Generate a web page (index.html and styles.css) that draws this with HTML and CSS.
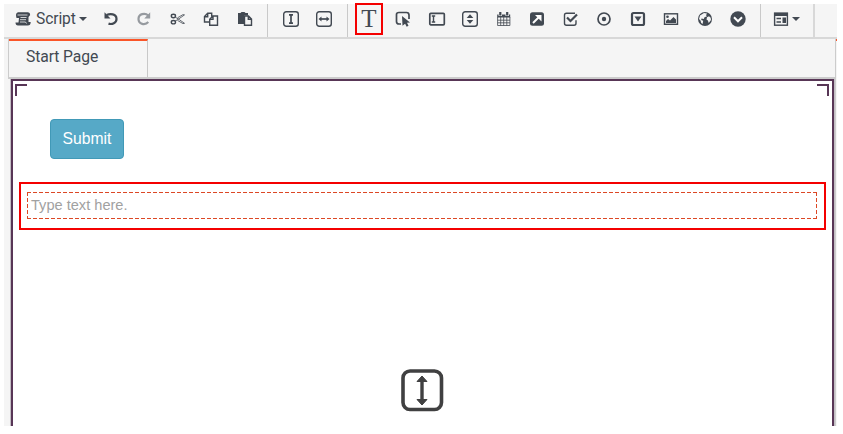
FILE: index.html
```html
<!DOCTYPE html>
<html lang="en">
<head>
<meta charset="utf-8">
<title>Page designer</title>
<link rel="stylesheet" href="styles.css">
</head>
<body>
<div class="app">
  <div class="toolbar">
    <div class="group group-edit">
      <button class="menu script">
        <svg class="icon" viewBox="0 0 18 18"><path d="M4 2.200h10q2.200 .3 2.200 2.800L14.500 7v5h2.200q0 3.500-3 3.500H4q-2.500 0-2.500-3h3L5 8H2.500Q1 3 4 2.200Z" class="solid"/><path d="M3.500 5h10M6.500 7.500h6M6 9.700h6M6 12h5.500l1 1.500" class="paper"/></svg>
        <span>Script</span><i class="caret"></i>
      </button>
      <button class="tool"><svg class="icon" viewBox="0 0 18 18"><path d="M4.500 5C8 3.600 14.500 3.500 14.500 9c0 4-4.500 5.800-8 4.600" class="line heavy"/><path d="M2.500 2.300v6.200h6Z" class="solid"/></svg></button>
      <button class="tool muted"><svg class="icon" viewBox="0 0 18 18"><path d="M13.300 5.500C10 2.500 3.500 3.800 3.500 9c0 5.200 6.500 6.700 9.800 3" class="line heavy"/><path d="M15.200 2.300v6.200H9.300Z" class="solid"/></svg></button>
      <button class="tool"><svg class="icon" viewBox="0 0 18 18"><path d="M6.300 7.200l3.200 1.900 6-4.200-1.500-.3-5.500 3.200M6.300 11l3.200-1.900 6 4.200-1.500 .3-5.500-3.200" class="line hair"/><ellipse cx="4.400" cy="6" rx="2.100" ry="1.700" class="line thin"/><ellipse cx="4.400" cy="12.200" rx="2.100" ry="1.700" class="line thin"/></svg></button>
      <button class="tool"><svg class="icon" viewBox="0 0 18 18"><path d="M7 12H2.500V6.500l3.200-3.200h4v3.200M5.700 3.500v3.200h-3M7.700 15.300V9.200l3.200-3.200h4.600v9.300ZM11 6v3.400H7.800" class="line thin"/></svg></button>
      <button class="tool"><svg class="icon" viewBox="0 0 18 18"><path d="M2 3h2.500l1-1h3l1 1H12v2.500H8V14H2Z" class="solid"/><path d="M8.500 6h4l3 3v6.300h-7ZM12.300 6v3.200h3.200" class="line thin"/></svg></button>
    </div>
    <div class="group group-size">
      <button class="tool"><svg class="icon" viewBox="0 0 18 18"><rect x="1.700" y="1.700" width="14.600" height="14.600" rx="2.500" class="line thin"/><path d="M9 5v8M7 4.800h4M7 13.200h4" class="line"/></svg></button>
      <button class="tool"><svg class="icon" viewBox="0 0 18 18"><rect x="1.700" y="1.700" width="14.600" height="14.600" rx="2.500" class="line thin"/><path d="M5 9h8" class="line"/><path d="M3.500 9l3-2.500v5ZM14.500 9l-3-2.500v5Z" class="solid"/></svg></button>
    </div>
    <div class="group group-fields">
      <button class="tool text-tool">T</button>
      <button class="tool"><svg class="icon" viewBox="0 0 18 18"><path d="M7 14H5q-2.500 0-2.500-2.500V4.500Q2.500 2.500 5 2.500h7.500Q15 2.500 15 5v4" class="line"/><path d="M8 6l8 6.500-3 .2 1.500 3-1.800 1-1.600-3-2.600 2Z" class="solid"/></svg></button>
      <button class="tool"><svg class="icon" viewBox="0 0 18 18"><rect x="1.800" y="3.300" width="14.500" height="11.500" rx="1" class="line"/><path d="M5.500 6v6M3.800 6h3.400M3.800 12h3.400" class="line thin"/></svg></button>
      <button class="tool"><svg class="icon" viewBox="0 0 18 18"><rect x="1.700" y="1.700" width="14.600" height="14.600" rx="2.500" class="line thin"/><path d="M5.700 8L9 4.300 12.300 8ZM5.700 10h6.600L9 13.700Z" class="solid"/></svg></button>
      <button class="tool"><svg class="icon" viewBox="0 0 18 18"><path d="M2.200 4.500h13v3h-13Z" class="solid"/><path d="M2.600 7v8.500h12.300V7M2.600 10.200h12.300M2.600 12.800h12.300M5.700 7v8.500M8.700 7v8.500M11.800 7v8.500" class="line hair"/><path d="M5.300 2v4M12.200 2v4" class="paper wide"/><path d="M5.300 2v3.500M12.200 2v3.500" class="line heavy"/></svg></button>
      <button class="tool"><svg class="icon" viewBox="0 0 18 18"><rect x="2" y="2.300" width="14" height="13.500" rx="2.500" class="solid"/><path d="M5 13l6-6" class="bright"/><path d="M7 5h6.500v6.500Z" fill="#fff"/></svg></button>
      <button class="tool"><svg class="icon" viewBox="0 0 18 18"><path d="M13 3.300H4.500q-2 0-2 2v8q0 2 2 2h7.500q2 0 2-2v-3" class="line thin"/><path d="M5 7.500l3.500 3.500 6.500-6.500" class="line heavy"/></svg></button>
      <button class="tool"><svg class="icon" viewBox="0 0 18 18"><circle cx="9" cy="9" r="6" class="line"/><circle cx="9" cy="9" r="2.200" class="solid"/></svg></button>
      <button class="tool"><svg class="icon" viewBox="0 0 18 18"><rect x="3" y="3" width="12" height="12" rx="1.500" class="line heavy"/><path d="M5.500 6.500h7L9 11.500Z" class="solid"/></svg></button>
      <button class="tool"><svg class="icon" viewBox="0 0 18 18"><rect x="2.500" y="3.800" width="13" height="10.500" class="line thin"/><circle cx="5.500" cy="6.800" r="1.300" class="solid"/><path d="M4 13v-2l2-2 2 1.500L11.500 7 14 9.500V13Z" class="solid"/></svg></button>
      <button class="tool"><svg class="icon" viewBox="0 0 18 18"><circle cx="9" cy="9" r="7" class="solid"/><path d="M8 2.900l3 .6-1 1.700 1 1-2.500 1-.7 1.800-2.300-.5-.3 1.500 2 .7-.6 3.300-1.400-1-.7-2.500L3 9l1-3.500ZM13 6.300l1.700 1.400.3 2.300-2.300 3-.8-2.500-1.400-1 .5-2.200Z" class="land"/></svg></button>
      <button class="tool"><svg class="icon" viewBox="0 0 18 18"><circle cx="9" cy="9" r="7.700" class="solid"/><path d="M5 7.300l4 4 4-4" class="bright"/></svg></button>
    </div>
    <div class="group group-layout">
      <button class="menu"><svg class="icon layout-icon" viewBox="0 0 18 18"><rect x="2.600" y="3.200" width="12.800" height="12" class="line thin"/><path d="M2 2.700h14v3.300H2ZM10.500 7.500H14V13h-3.500Z" class="solid"/><path d="M4.500 8.500H9M4.500 12H9" class="line"/></svg><i class="caret"></i></button>
    </div>
  </div>
  <div class="panels">
    <div class="workspace">
      <div class="tabs"><div class="tab">Start Page</div></div>
      <div class="canvas">
        <i class="corner corner-left"></i><i class="corner corner-right"></i>
        <button class="submit">Submit</button>
        <div class="selection"><div class="text-field">Type text here.</div></div>
        <svg class="resize" viewBox="0 0 44 44"><rect x="3" y="3" width="38.500" height="38.500" rx="7" fill="none" stroke="#404041" stroke-width="3.600"/><path d="M22 12v21" stroke="#404041" stroke-width="3.400"/><path d="M22 8l5 5.500H17ZM22 37l5-5.500H17Z" fill="#404041" stroke="#404041" stroke-linejoin="round"/></svg>
      </div>
    </div>
    <div class="side-panel"></div>
  </div>
</div>
</body>
</html>
```

FILE: styles.css
```css
* { box-sizing: border-box; }
html { height: 434px; overflow: hidden; }
body { margin: 0; padding: 4px; background: #fff; font-family: Roboto, sans-serif; color: #424952; }
button { border: 0; padding: 0; background: none; font: inherit; color: inherit; }

.app { width: 833px; height: 422px; background: #f5f5f5; }
.toolbar { display: flex; height: 35px; border-bottom: 2px solid #d8d8d8; }
.group { display: flex; height: 33px; flex: none; border-right: 1px solid #c9c9c9; }
.group-edit { width: 264px; }
.group-size { width: 80px; padding-left: 6px; }
.group-fields { width: 413px; padding-left: 5px; }
.group-layout { width: 54px; padding-left: 11px; border-right: 2px solid #d8d8d8; }

.tool { display: flex; align-items: center; justify-content: center; flex: none; width: 33.5px; height: 29px; color: #424952; }
.muted { color: #969a9f; }
.menu { display: flex; align-items: center; height: 29px; font-size: 16px; }
.script { width: 90px; padding-left: 10px; }
.script span { margin-left: 4px; font-size: 15.600px; letter-spacing: -.1px; }
.icon { display: block; width: 18px; height: 18px; flex: none; }
.layout-icon { margin-right: 1px; }
.caret { flex: none; width: 0; height: 0; margin-left: 1px; border: 4px solid transparent; border-top-color: #424952; border-bottom: 0; }
.script .caret { margin-left: 3px; }
.line { fill: none; stroke: currentColor; stroke-width: 1.700; }
.thin { stroke-width: 1.400; }
.hair { stroke-width: .8; }
.heavy { stroke-width: 2.200; }
.solid { fill: currentColor; }
.paper { fill: none; stroke: #f5f5f5; stroke-width: .8; }
.wide { stroke-width: 3.400; }
.bright { fill: none; stroke: #fff; stroke-width: 2; }
.land { fill: #f5f5f5; }
.text-tool { width: 28px; height: 32px; margin: -1px 3.500px 0 2px; border: 2px solid #f40000; font: 25px "Liberation Serif", serif; }

.panels { display: flex; height: 387px; }
.workspace { width: 832px; padding-left: 4px; border-right: 1px solid #ccc; }
.side-panel { width: 1px; border-top: 2px solid #fa5528; }
.tabs { display: flex; height: 40px; border-left: 1px solid #ccc; border-bottom: 2px solid #ccc; }
.tab { width: 139px; padding: 6px 0 0 17px; border-top: 2px solid #fa5528; border-right: 1px solid #c8c8c8; font-size: 15.700px; letter-spacing: -.1px; line-height: 19px; }
.canvas { position: relative; height: 347px; margin-right: 1px; border: 2px solid #583656; border-bottom: 0; margin-left: 3px; padding: 38px 6px 0; background: #fff; box-shadow: -1px 0 #c4bec5, 1px 0 #c4bec5; }
.corner { position: absolute; top: 3px; width: 12px; height: 12px; border-top: 2px solid #583656; }
.corner-left { left: 2px; border-left: 2px solid #583656; }
.corner-right { right: 3px; border-right: 2px solid #583656; }
.submit { display: block; width: 74px; height: 40px; margin-left: 31px; border: 1px solid #4199b7; border-radius: 4px; background: #56a9c7; color: #fff; font: 15.700px "Liberation Sans", sans-serif; }
.selection { width: 807px; height: 48px; margin-top: 23px; padding: 8px 6px; border: 2px solid #f40000; }
.text-field {
  --dash: #dc4825 0 4px, transparent 4px 6px;
  width: 790px; height: 27px; padding: 1px 4px;
  background:
    repeating-linear-gradient(90deg, var(--dash)) 0 0 / 100% 1.400px no-repeat,
    repeating-linear-gradient(90deg, var(--dash)) 0 100% / 100% 1.400px no-repeat,
    repeating-linear-gradient(var(--dash)) 0 0 / 1.400px 100% no-repeat,
    repeating-linear-gradient(var(--dash)) 100% 0 / 1.400px 100% no-repeat;
  font: 14.600px/24px "Liberation Sans", sans-serif; color: #a1a1a1;
}
.resize { display: block; width: 44px; height: 44px; margin: 138px 0 0 381px; }
```
